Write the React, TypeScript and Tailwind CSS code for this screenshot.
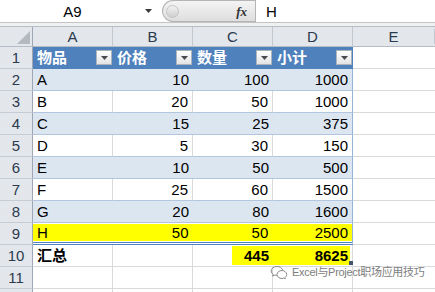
import React from "react";

type DataRow = [string, number, number, number];

const data: DataRow[] = [
  ["A", 10, 100, 1000],
  ["B", 20, 50, 1000],
  ["C", 15, 25, 375],
  ["D", 5, 30, 150],
  ["E", 10, 50, 500],
  ["F", 25, 60, 1500],
  ["G", 20, 80, 1600],
  ["H", 50, 50, 2500],
];

function RowHead({ n }: { n?: number }) {
  return (
    <div className="w-[33px] shrink-0 h-full bg-[#e3e7ec] border-r border-r-[#9ea7b3] border-b border-b-[#c6ccd4] flex items-center justify-center text-[#2b3a4e]">
      {n}
    </div>
  );
}

function FilterBtn() {
  return (
    <span className="w-[16px] h-[15px] bg-linear-to-b from-white to-[#e4e4e4] border border-[#aeb4bb] flex items-center justify-center">
      <svg width="7" height="4" viewBox="0 0 7 4">
        <polygon points="0,0 7,0 3.5,4" fill="#4a4a4a" />
      </svg>
    </span>
  );
}

function HeadCell({ label }: { label: string }) {
  return (
    <div className="w-[80px] shrink-0 h-full bg-[#4f81bd] border-b border-b-[#4f81bd] flex items-center justify-between pl-[4px] pr-[1px] text-white font-bold">
      <span>{label}</span>
      <FilterBtn />
    </div>
  );
}

function BodyRow({ n, row }: { n: number; row: DataRow }) {
  const band = n % 2 === 0;
  const cells = [row[1], row[2], row[3]];
  if (n === 9) {
    return (
      <div className="flex h-[22px]">
        <RowHead n={n} />
        <div className="w-[320px] shrink-0 h-full bg-white border-r border-r-[#95b3d7] border-b-[3px] border-double border-b-[#4f81bd] pt-[1px]">
          <div className="h-[17px] bg-[#ffff00] flex items-center">
            <div className="w-[80px] pl-[4px]">{row[0]}</div>
            {cells.map((v, i) => (
              <div key={i} className="w-[80px] text-right pr-[4px]">
                {v}
              </div>
            ))}
          </div>
        </div>
        <div className="flex-1 h-full border-b border-b-[#d9d9d9]" />
      </div>
    );
  }
  return (
    <div className="flex h-[22px]">
      <RowHead n={n} />
      <div
        className={
          band
            ? "w-[80px] shrink-0 h-full bg-[#dce6f1] border-b border-b-[#b3c6e0] flex items-center pl-[4px]"
            : "w-[80px] shrink-0 h-full bg-white border-r border-r-[#d9d9d9] border-b border-b-[#b3c6e0] flex items-center pl-[4px]"
        }
      >
        {row[0]}
      </div>
      {cells.map((v, i) => (
        <div
          key={i}
          className={
            i === 2
              ? band
                ? "w-[80px] shrink-0 h-full bg-[#dce6f1] border-r border-r-[#95b3d7] border-b border-b-[#b3c6e0] flex items-center justify-end pr-[4px]"
                : "w-[80px] shrink-0 h-full bg-white border-r border-r-[#95b3d7] border-b border-b-[#b3c6e0] flex items-center justify-end pr-[4px]"
              : band
              ? "w-[80px] shrink-0 h-full bg-[#dce6f1] border-b border-b-[#b3c6e0] flex items-center justify-end pr-[4px]"
              : "w-[80px] shrink-0 h-full bg-white border-r border-r-[#d9d9d9] border-b border-b-[#b3c6e0] flex items-center justify-end pr-[4px]"
          }
        >
          {v}
        </div>
      ))}
      <div className="flex-1 h-full border-b border-b-[#d9d9d9]" />
    </div>
  );
}

function EmptyRow({ n }: { n?: number }) {
  return (
    <div className="flex h-[22px]">
      <RowHead n={n} />
      <div className="w-[80px] shrink-0 h-full border-r border-r-[#d9d9d9] border-b border-b-[#d9d9d9]" />
      <div className="w-[80px] shrink-0 h-full border-r border-r-[#d9d9d9] border-b border-b-[#d9d9d9]" />
      <div className="w-[80px] shrink-0 h-full border-r border-r-[#d9d9d9] border-b border-b-[#d9d9d9]" />
      <div className="w-[80px] shrink-0 h-full border-r border-r-[#d9d9d9] border-b border-b-[#d9d9d9]" />
      <div className="flex-1 h-full border-b border-b-[#d9d9d9]" />
    </div>
  );
}

function WeChatIcon() {
  return (
    <svg width="18" height="14" viewBox="0 0 18 14" fill="none" stroke="#8a8a8a" strokeWidth="1">
      <path d="M7 1.5c-3.3 0-5.8 2-5.8 4.5 0 1.4.8 2.6 2 3.4l-.5 1.7 2-1c.7.2 1.4.3 2.2.3" />
      <path d="M12 5.5c-2.8 0-5 1.8-5 4s2.2 4 5 4c.6 0 1.2-.1 1.7-.3l1.6.8-.4-1.4c1-.7 1.8-1.8 1.8-3.1 0-2.2-2.2-4-4.7-4z" />
      <path d="M12.6 4.8C12 2.9 9.8 1.5 7 1.5" />
    </svg>
  );
}

export default function App() {
  return (
    <div className="w-[435px] h-[292px] overflow-hidden bg-white relative font-['Liberation_Sans','Noto_Sans_CJK_SC',sans-serif] text-[15px] text-black leading-none">
      {/* formula bar */}
      <div className="h-[23px] flex border-b border-b-[#c4c4c4] bg-white">
        <div className="w-[145px] flex items-center justify-center">A9</div>
        <div className="w-[17px] flex items-center">
          <svg width="7" height="4" viewBox="0 0 7 4">
            <polygon points="0,0 7,0 3.5,4" fill="#3a3a3a" />
          </svg>
        </div>
        <div className="w-[93px] h-[22px] rounded-l-full bg-linear-to-b from-[#f4f4f4] to-[#dedede] border border-[#b4b4b4] border-r-0 flex items-center">
          <span className="ml-[3px] w-[13px] h-[13px] rounded-full bg-linear-to-b from-[#f2f2f2] to-[#cfcfcf] border border-[#c4c4c4]" />
          <span className="ml-auto mr-[8px] font-['Liberation_Serif',serif] italic font-bold text-[13px] text-[#333]">
            fx
          </span>
        </div>
        <div className="flex-1 border-l border-l-[#b4b4b4] flex items-center pl-[10px]">H</div>
      </div>
      <div className="h-[4px] bg-[#eef0f2] border-b border-b-[#b8bec6]" />

      {/* column headers */}
      <div className="flex h-[20px] text-[#2b3a4e]">
        <div className="w-[33px] shrink-0 h-full bg-[#e3e7ec] border-r border-r-[#9ea7b3] border-b border-b-[#b5bcc6] flex items-end justify-end pr-[2px] pb-[2px]">
          <svg width="13" height="13" viewBox="0 0 13 13">
            <polygon points="13,0 13,13 0,13" fill="#b4b9c0" />
          </svg>
        </div>
        {["A", "B", "C", "D"].map((c) => (
          <div
            key={c}
            className="w-[80px] shrink-0 h-full bg-[#e3e7ec] border-r border-r-[#c2c8d0] border-b border-b-[#b5bcc6] flex items-center justify-center"
          >
            {c}
          </div>
        ))}
        <div className="flex-1 h-full bg-[#e3e7ec] border-b border-b-[#b5bcc6] flex items-center justify-center">
          <span className="w-[82px] border-r border-r-[#c2c8d0] text-center">E</span>
        </div>
      </div>

      {/* row 1: table header */}
      <div className="flex h-[22px]">
        <RowHead n={1} />
        <HeadCell label="物品" />
        <HeadCell label="价格" />
        <HeadCell label="数量" />
        <HeadCell label="小计" />
        <div className="flex-1 h-full border-b border-b-[#d9d9d9]" />
      </div>

      {data.map((row, i) => (
        <BodyRow key={i} n={i + 2} row={row} />
      ))}

      {/* row 10: totals */}
      <div className="flex h-[22px]">
        <RowHead n={10} />
        <div className="w-[80px] shrink-0 h-full border-r border-r-[#d9d9d9] border-b border-b-[#d9d9d9] flex items-center pl-[4px] font-bold">
          汇总
        </div>
        <div className="w-[80px] shrink-0 h-full border-r border-r-[#d9d9d9] border-b border-b-[#d9d9d9]" />
        <div className="w-[80px] shrink-0 h-full border-b border-b-[#d9d9d9] py-[1px] pl-[39px]">
          <div className="h-full bg-[#ffff00] flex items-center justify-end pr-[4px] font-bold">445</div>
        </div>
        <div className="w-[80px] shrink-0 h-full border-r border-r-[#d9d9d9] border-b border-b-[#d9d9d9] py-[1px] pr-[2px] relative">
          <div className="h-full bg-[#ffff00] flex items-center justify-end pr-[2px] font-bold">8625</div>
          <span className="absolute right-[-1px] bottom-[1px] w-[4px] h-[4px] bg-[#44546a]" />
        </div>
        <div className="flex-1 h-full border-b border-b-[#d9d9d9]" />
      </div>

      <EmptyRow n={11} />
      <EmptyRow />

      {/* watermark */}
      <div className="absolute left-[270px] top-[265px] flex items-center gap-[4px] whitespace-nowrap text-[11px] text-[#7d7d7d] tracking-[-0.3px] [text-shadow:0_0_2px_#fff]">
        <WeChatIcon />
        <span>Excel与Project职场应用技巧</span>
      </div>
    </div>
  );
}
